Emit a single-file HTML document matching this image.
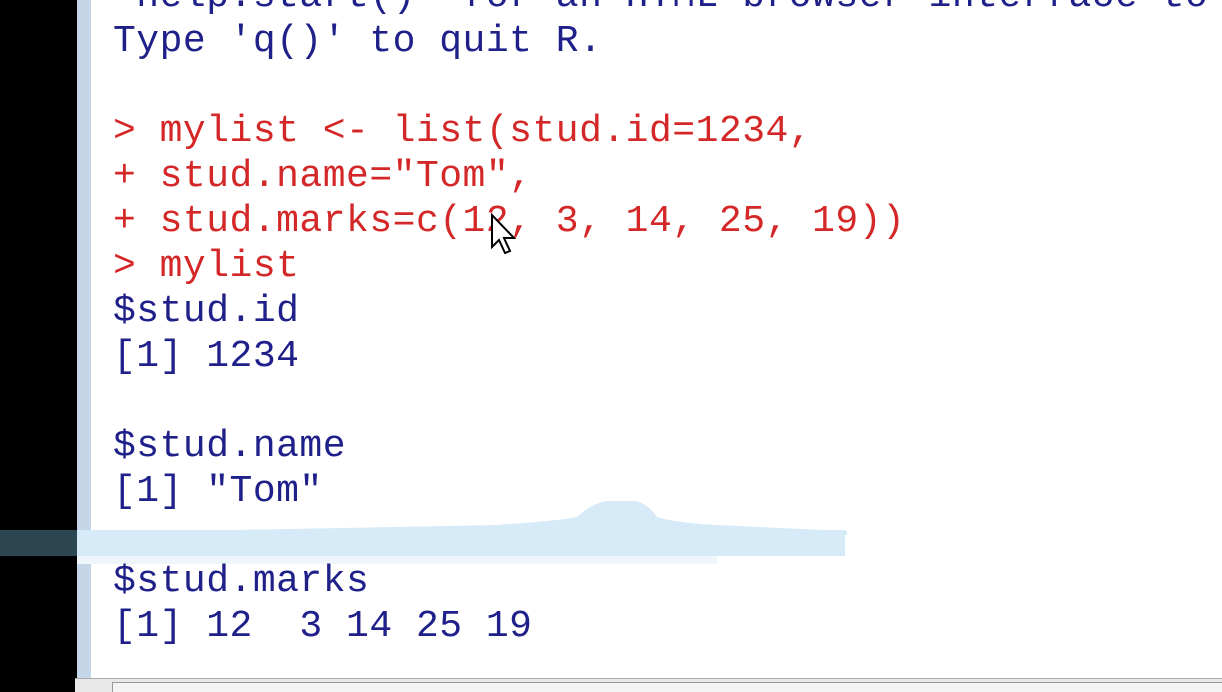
<!DOCTYPE html>
<html><head><meta charset="utf-8"><style>
html,body{margin:0;padding:0;width:1222px;height:692px;overflow:hidden;background:#fff;position:relative}
.blk{position:absolute;left:0;top:0;width:77px;height:692px;background:#000}
.brd{position:absolute;left:77px;top:0;width:14px;height:692px;background:#c5d6e8}
pre{position:absolute;left:113px;top:-26px;width:1109px;height:718px;overflow:hidden;margin:0;font-family:"Liberation Mono","Courier New",monospace;font-size:38px;letter-spacing:0.5px;line-height:45px;color:#20208a;white-space:pre}
.r{color:#d42828}
.band{position:absolute;left:77px;top:530px;width:768px;height:26px;background:#d6eaf8}
.band2{position:absolute;left:0;top:530px;width:77px;height:26px;background:#2c4652}
.band3{position:absolute;left:77px;top:556px;width:640px;height:8px;background:#eef6fc}
.bot{position:absolute;left:75px;top:678px;width:1147px;height:14px;background:#e8e8e8;border-top:1px solid #aaa;box-sizing:border-box}
.bot2{position:absolute;left:112px;top:682px;width:1110px;height:10px;background:#f4f4f4;border-left:1px solid #999;border-top:1px solid #999;box-sizing:border-box}
</style></head><body>
<div class="blk"></div><div class="brd"></div>
<div class="band2"></div>
<svg style="position:absolute;left:77px;top:495px" width="770" height="40"><path d="M0 38 L420 30 Q480 26 500 22 Q515 8 530 6 L560 6 Q572 10 580 22 Q600 28 640 30 L770 36 L770 40 L0 40Z" fill="#d6eaf8"/></svg>
<div class="band"></div><div class="band3"></div>
<pre>'help.start()' for an HTML browser interface to help.
Type 'q()' to quit R.

<span class="r">&gt; mylist &lt;- list(stud.id=1234,
+ stud.name="Tom",
+ stud.marks=c(12, 3, 14, 25, 19))
&gt; mylist</span>
$stud.id
[1] 1234

$stud.name
[1] "Tom"

$stud.marks
[1] 12  3 14 25 19</pre>
<svg style="position:absolute;left:490px;top:213px" width="30" height="45"><path d="M2 2 L2 34 L9 27 L15 40 L20 38 L14 25 L24 25 Z" fill="#fff" stroke="#000" stroke-width="2"/></svg>
<div class="bot"></div><div class="bot2"></div>
</body></html>
